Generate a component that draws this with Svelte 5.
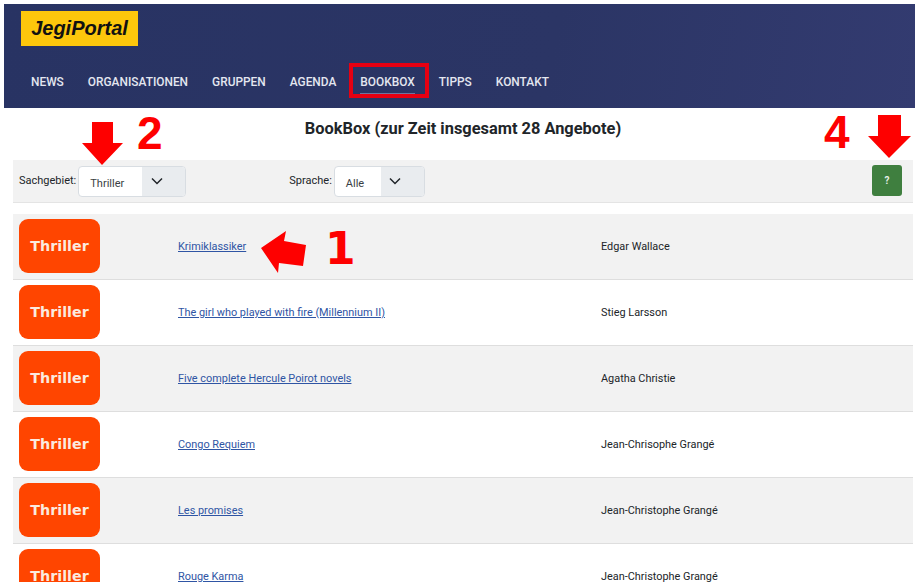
<script>
    const navItems = ['News', 'Organisationen', 'Gruppen', 'Agenda', 'BookBox', 'Tipps', 'Kontakt'];

    const books = [
        { title: 'Krimiklassiker', author: 'Edgar Wallace' },
        { title: 'The girl who played with fire (Millennium II)', author: 'Stieg Larsson' },
        { title: 'Five complete Hercule Poirot novels', author: 'Agatha Christie' },
        { title: 'Congo Requiem', author: 'Jean-Chrisophe Grangé' },
        { title: 'Les promises', author: 'Jean-Christophe Grangé' },
        { title: 'Rouge Karma', author: 'Jean-Christophe Grangé' }
    ];
</script>

<div class="page">
    <header>
        <div class="logo">JegiPortal</div>
        <nav>
            {#each navItems as item}
                <a href="#top" class:active={item === 'BookBox'}>{item}</a>
            {/each}
        </nav>
    </header>

    <main>
        <h1>BookBox (zur Zeit insgesamt 28 Angebote)</h1>

        <div class="filters">
            <label class="first" for="area">Sachgebiet:</label>
            <div class="select area" id="area">
                <span class="value">Thriller</span>
                <span class="caret">
                    <svg width="12" height="12" viewBox="0 0 12 12"><path d="M1 3.5 6 8.5l5-5" /></svg>
                </span>
            </div>
            <label class="second" for="lang">Sprache:</label>
            <div class="select lang" id="lang">
                <span class="value">Alle</span>
                <span class="caret">
                    <svg width="12" height="12" viewBox="0 0 12 12"><path d="M1 3.5 6 8.5l5-5" /></svg>
                </span>
            </div>
            <button type="button" class="help">?</button>
        </div>

        <div class="list">
            {#each books as book}
                <div class="row">
                    <div class="badge">Thriller</div>
                    <a class="title" href="#top">{book.title}</a>
                    <span class="author">{book.author}</span>
                </div>
            {/each}
        </div>
    </main>

    <!-- red annotations drawn over the screenshot -->
    <svg class="arrow arrow-area" width="43" height="44" viewBox="0 0 43 44">
        <path d="M11 1H32V22H42L21 44 1 22H11Z" />
    </svg>
    <svg class="arrow arrow-help" width="44" height="45" viewBox="0 0 44 45">
        <path d="M10 1H33V22H43L21 44 0 22H10Z" />
    </svg>
    <svg class="arrow arrow-row" width="46" height="44" viewBox="0 0 46 44">
        <path d="M1 18 26 1 24 11 46 15 43 36 19 33 18 43Z" />
    </svg>
    <span class="mark mark-2">2</span>
    <span class="mark mark-4">4</span>
    <span class="mark mark-1">1</span>
</div>

<style>
    :global(body) {
        margin: 0;
        background: #fff;
        overflow: hidden;
    }

    .page {
        position: relative;
        width: 915px;
        height: 582px;
        overflow: hidden;
        font-family: Roboto, "Liberation Sans", sans-serif;
        color: #212529;
    }

    header {
        margin: 4px 0 0 4px;
        height: 104px;
        box-sizing: border-box;
        padding: 7px 0 0 17px;
        background: linear-gradient(100deg, #283363, #2b3565 60%, #333b70);
    }

    .logo {
        width: 117px;
        height: 35px;
        background: #fdc70c;
        color: #111;
        font: italic bold 20px/35px "Liberation Sans", sans-serif;
        text-align: center;
    }

    nav {
        display: flex;
        gap: 24px;
        margin: 22px 0 0 10px;
    }

    nav a {
        position: relative;
        padding: 6px 0;
        color: #e4e7f0;
        font-size: 11.9px;
        font-weight: 500;
        line-height: 16px;
        text-transform: uppercase;
        text-decoration: none;
    }

    nav a.active::before {
        content: "";
        position: absolute;
        left: -11px;
        right: -14px;
        top: -5px;
        bottom: -2px;
        border: 4px solid #e60012;
    }

    nav a.active::after {
        content: "";
        position: absolute;
        left: 0;
        right: 0;
        bottom: 2px;
        height: 1px;
        background: #6d749f;
    }

    main {
        padding: 0 2px 0 13px;
    }

    h1 {
        margin: 0;
        padding-top: 12px;
        height: 52px;
        box-sizing: border-box;
        font-size: 16.4px;
        font-weight: 700;
        line-height: 18px;
        text-align: center;
    }

    .filters {
        display: flex;
        align-items: center;
        height: 43px;
        box-sizing: border-box;
        padding: 0 11px 0 6px;
        background: #f2f2f2;
        border-bottom: 1px solid #e4e4e4;
        font-size: 11px;
    }

    .filters label {
        margin-top: -2px;
    }

    .second {
        margin-left: 103px;
    }

    .select {
        display: flex;
        height: 31px;
        margin-left: 2px;
        box-sizing: border-box;
        background: #fff;
        border: 1px solid #d8dde2;
        border-radius: 4px;
        overflow: hidden;
    }

    .area {
        width: 108px;
    }

    .lang {
        width: 91px;
    }

    .value {
        flex: 1;
        padding: 3px 0 0 11px;
        line-height: 28px;
        color: #3a3f44;
    }

    .caret {
        display: flex;
        align-items: center;
        justify-content: center;
        box-sizing: border-box;
        width: 43px;
        padding-right: 14px;
        background: #e9ecef;
    }

    .caret svg path {
        fill: none;
        stroke: #212529;
        stroke-width: 1.5;
    }

    .help {
        width: 30px;
        height: 31px;
        margin: -2px 0 0 auto;
        padding: 0;
        background: #3f7f3f;
        border: none;
        border-radius: 3px;
        color: #e6efe6;
        font: 700 10px Roboto, sans-serif;
    }

    .list {
        margin-top: 11px;
    }

    .row {
        display: flex;
        align-items: center;
        height: 66px;
        box-sizing: border-box;
        padding-left: 6px;
        border-bottom: 1px solid #dedede;
        font-size: 10.9px;
    }

    .row:nth-child(odd) {
        background: #f2f2f2;
    }

    .badge {
        flex: none;
        width: 81px;
        height: 54px;
        margin-top: -2px;
        border-radius: 9px;
        background: #ff4500;
        color: #fbeadf;
        font: 700 14.3px/54px "DejaVu Sans", sans-serif;
        text-align: center;
    }

    .title {
        flex: none;
        width: 423px;
        margin-left: 78px;
        color: #2f55a4;
    }

    .author {
        color: #212529;
    }

    .arrow {
        position: absolute;
    }

    .arrow-area {
        left: 81px;
        top: 121px;
    }

    .arrow-help {
        left: 868px;
        top: 114px;
    }

    .arrow-row {
        left: 260px;
        top: 230px;
    }

    .arrow path {
        fill: #fe0000;
    }

    .mark {
        position: absolute;
        color: #fe0000;
        font: 700 46px/56px "Liberation Sans", sans-serif;
    }

    .mark-2 {
        left: 137px;
        top: 105px;
    }

    .mark-4 {
        left: 824px;
        top: 104px;
    }

    .mark-1 {
        left: 325px;
        top: 221px;
        font: 700 44px/56px "DejaVu Sans", sans-serif;
    }
</style>
